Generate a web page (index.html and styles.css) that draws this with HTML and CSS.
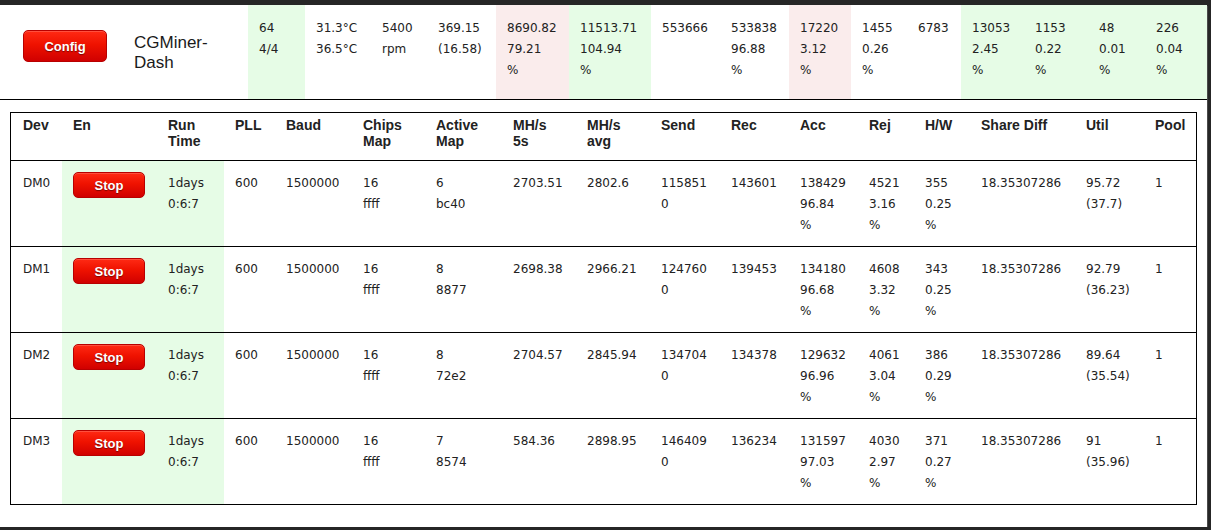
FILE: index.html
```html
<!DOCTYPE html>
<html>
<head>
<meta charset="utf-8">
<title>CGMiner-Dash</title>
<link rel="stylesheet" href="styles.css">
</head>
<body>
<div class="screen">
  <table class="summary">
    <colgroup>
      <col class="w123"><col class="w125"><col class="w57"><col class="w66"><col class="w56"><col class="w69"><col class="w73"><col class="w82"><col class="w69"><col class="w69"><col class="w62"><col class="w56"><col class="w54"><col class="w63"><col class="w64"><col class="w57"><col class="w62">
    </colgroup>
    <tr>
      <td class="cfg"><button class="btn btn-config">Config</button></td>
      <td class="title">CGMiner-Dash</td>
      <td class="ok">64<br>4/4</td>
      <td>31.3°C<br>36.5°C</td>
      <td>5400<br>rpm</td>
      <td>369.15<br>(16.58)</td>
      <td class="bad">8690.82<br>79.21<br>%</td>
      <td class="ok">11513.71<br>104.94<br>%</td>
      <td>553666</td>
      <td>533838<br>96.88<br>%</td>
      <td class="bad">17220<br>3.12<br>%</td>
      <td>1455<br>0.26<br>%</td>
      <td>6783</td>
      <td class="ok">13053<br>2.45<br>%</td>
      <td class="ok">1153<br>0.22<br>%</td>
      <td class="ok">48<br>0.01<br>%</td>
      <td class="ok">226<br>0.04<br>%</td>
    </tr>
  </table>

  <table class="grid">
    <colgroup>
      <col class="w51"><col class="w95"><col class="w67"><col class="w51"><col class="w77"><col class="w73"><col class="w77"><col class="w74"><col class="w74"><col class="w70"><col class="w69"><col class="w69"><col class="w56"><col class="w56"><col class="w105"><col class="w69"><col class="w52">
    </colgroup>
    <thead>
      <tr>
        <th>Dev</th><th>En</th><th>Run<br>Time</th><th>PLL</th><th>Baud</th><th>Chips<br>Map</th><th>Active<br>Map</th><th>MH/s<br>5s</th><th>MH/s<br>avg</th><th>Send</th><th>Rec</th><th>Acc</th><th>Rej</th><th>H/W</th><th>Share Diff</th><th>Util</th><th>Pool</th>
      </tr>
    </thead>
    <tbody>
      <tr>
        <td>DM0</td><td class="ok"><button class="btn btn-stop">Stop</button></td><td class="ok">1days<br>0:6:7</td><td>600</td><td>1500000</td><td>16<br>ffff</td><td>6<br>bc40</td><td>2703.51</td><td>2802.6</td><td class="wrap">1158510</td><td>143601</td><td>138429<br>96.84<br>%</td><td>4521<br>3.16<br>%</td><td>355<br>0.25<br>%</td><td>18.35307286</td><td>95.72<br>(37.7)</td><td>1</td>
      </tr>
      <tr>
        <td>DM1</td><td class="ok"><button class="btn btn-stop">Stop</button></td><td class="ok">1days<br>0:6:7</td><td>600</td><td>1500000</td><td>16<br>ffff</td><td>8<br>8877</td><td>2698.38</td><td>2966.21</td><td class="wrap">1247600</td><td>139453</td><td>134180<br>96.68<br>%</td><td>4608<br>3.32<br>%</td><td>343<br>0.25<br>%</td><td>18.35307286</td><td>92.79<br>(36.23)</td><td>1</td>
      </tr>
      <tr>
        <td>DM2</td><td class="ok"><button class="btn btn-stop">Stop</button></td><td class="ok">1days<br>0:6:7</td><td>600</td><td>1500000</td><td>16<br>ffff</td><td>8<br>72e2</td><td>2704.57</td><td>2845.94</td><td class="wrap">1347040</td><td>134378</td><td>129632<br>96.96<br>%</td><td>4061<br>3.04<br>%</td><td>386<br>0.29<br>%</td><td>18.35307286</td><td>89.64<br>(35.54)</td><td>1</td>
      </tr>
      <tr>
        <td>DM3</td><td class="ok"><button class="btn btn-stop">Stop</button></td><td class="ok">1days<br>0:6:7</td><td>600</td><td>1500000</td><td>16<br>ffff</td><td>7<br>8574</td><td>584.36</td><td>2898.95</td><td class="wrap">1464090</td><td>136234</td><td>131597<br>97.03<br>%</td><td>4030<br>2.97<br>%</td><td>371<br>0.27<br>%</td><td>18.35307286</td><td>91<br>(35.96)</td><td>1</td>
      </tr>
    </tbody>
  </table>
</div>
</body>
</html>
```

FILE: styles.css
```css
html, body {
  margin: 0;
  padding: 0;
}

body {
  background: #262626;
  font-family: "DejaVu Sans", Verdana, sans-serif;
  color: #222;
}

.screen {
  width: 1207px;
  height: 522px;
  margin-top: 5px;
  background: #fff;
  overflow: hidden;
  box-shadow: 1px 1px 0 #4a4a4a;
}

table {
  border-spacing: 0;
  table-layout: fixed;
}

/* column widths */
.w51 { width: 51px; }
.w52 { width: 52px; }
.w54 { width: 54px; }
.w56 { width: 56px; }
.w57 { width: 57px; }
.w62 { width: 62px; }
.w63 { width: 63px; }
.w64 { width: 64px; }
.w66 { width: 66px; }
.w67 { width: 67px; }
.w69 { width: 69px; }
.w70 { width: 70px; }
.w73 { width: 73px; }
.w74 { width: 74px; }
.w77 { width: 77px; }
.w82 { width: 82px; }
.w95 { width: 95px; }
.w105 { width: 105px; }
.w123 { width: 123px; }
.w125 { width: 125px; }

.ok { background: #e6fce6; }
.bad { background: #faecec; }

/* summary bar */
.summary {
  width: 1207px;
  border-bottom: 1px solid #000;
}

.summary tr {
  height: 94px;
}

.summary td {
  vertical-align: top;
  padding: 13px 11px 0;
  font-size: 12px;
  line-height: 21px;
  color: #222;
}

.summary td.cfg {
  padding: 25px 0 0 23px;
}

.summary td.title {
  padding-top: 28px;
  font-family: "Liberation Sans", Arial, sans-serif;
  font-size: 17px;
  line-height: 20px;
  color: #1a1a1a;
}

/* device grid */
.grid {
  width: 1187px;
  margin: 12px 0 0 10px;
  border: 1px solid #000;
}

.grid th {
  text-align: left;
  vertical-align: top;
  padding: 4px 11px 11px;
  font-family: "Liberation Sans", Arial, sans-serif;
  font-weight: bold;
  font-size: 14px;
  line-height: 16px;
  color: #222;
}

.grid td {
  vertical-align: top;
  padding: 12px 11px 10px;
  font-size: 12px;
  line-height: 21px;
  border-top: 1px solid #000;
  color: #222;
}

.grid th:first-child,
.grid td:first-child {
  padding-left: 12px;
}

.grid td.wrap {
  overflow-wrap: anywhere;
  word-break: break-all;
}

/* buttons */
.btn {
  display: block;
  box-sizing: border-box;
  padding: 0;
  margin: 0;
  border: 1px solid #b80000;
  border-radius: 5px;
  background: linear-gradient(to bottom, #ff2a14 0%, #ef1200 45%, #d00000 100%);
  box-shadow: inset 0 1px 0 rgba(255, 255, 255, 0.18);
  color: #fff;
  font-family: "Liberation Sans", Arial, sans-serif;
  font-weight: bold;
  font-size: 13px;
  text-shadow: 0 1px 1px rgba(0, 0, 0, 0.45);
  cursor: pointer;
}

.btn-config {
  width: 84px;
  height: 32px;
}

.btn-stop {
  width: 72px;
  height: 26px;
  margin-top: -1px;
}
```
